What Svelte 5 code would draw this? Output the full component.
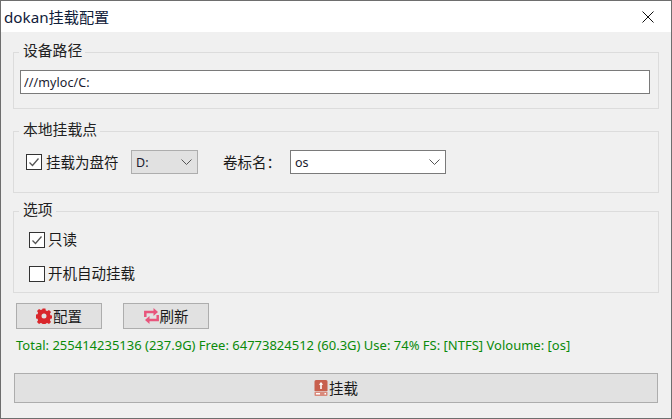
<script>
  let path = $state('///myloc/C:');
</script>

<div class="win">
  <header class="title">
    <span class="title-text">dokan挂载配置</span>
    <svg class="close" width="12" height="12" viewBox="0 0 12 12"><path d="M0.5 0.5L11.5 11.5M11.5 0.5L0.5 11.5" stroke="#111" stroke-width="1" fill="none"/></svg>
  </header>
  <main class="body">
    <fieldset class="group g1">
      <legend>设备路径</legend>
      <input class="path" bind:value={path} />
    </fieldset>
    <fieldset class="group g2">
      <legend>本地挂载点</legend>
      <div class="row">
        <span class="check-row drive">
          <span class="box"><svg width="14" height="14" viewBox="0 0 14 14"><path d="M2.500 7.500l3 3 6-7" stroke="#555" stroke-width="1.300" fill="none"/></svg></span>
          <span class="cn">挂载为盘符</span>
        </span>
        <span class="combo flat"><span class="val">D:</span><svg width="11" height="6" viewBox="0 0 11 6"><path d="M.5.5l5 5 5-5" stroke="#555" fill="none"/></svg></span>
        <span class="cn vol">卷标名：</span>
        <span class="combo white"><span class="val">os</span><svg width="11" height="6" viewBox="0 0 11 6"><path d="M.5.5l5 5 5-5" stroke="#555" fill="none"/></svg></span>
      </div>
    </fieldset>
    <fieldset class="group g3">
      <legend>选项</legend>
      <div class="options">
        <div class="check-row">
          <span class="box"><svg width="14" height="14" viewBox="0 0 14 14"><path d="M2.500 7.500l3 3 6-7" stroke="#555" stroke-width="1.300" fill="none"/></svg></span>
          <span class="cn">只读</span>
        </div>
        <div class="check-row second">
          <span class="box"></span>
          <span class="cn">开机自动挂载</span>
        </div>
      </div>
    </fieldset>
    <div class="actions">
      <button class="btn">
        <svg width="16" height="16" viewBox="0 0 16 16"><path fill="#d9262b" fill-rule="evenodd" d="M6.600.5h2.800l.4 2 1.400.6 1.800-1.100 2 2-1.100 1.800.6 1.400 2 .4v2.800l-2 .4-.6 1.400 1.100 1.800-2 2-1.800-1.100-1.400.6-.4 2H6.600l-.4-2-1.400-.6-1.800 1.100-2-2 1.100-1.800-.6-1.400-2-.4V6.600l2-.4.6-1.400L1 3l2-2 1.800 1.100 1.400-.6zM8 5.500a2.500 2.500 0 1 0 0 5 2.500 2.500 0 0 0 0-5z"/></svg>
        <span class="cn">配置</span>
      </button>
      <button class="btn">
        <svg width="15" height="16" viewBox="0 0 15 16"><path fill="none" stroke="#e8557c" stroke-width="2.500" d="M1.300 9V4H10M13.700 7v5H5"/><path fill="#e8557c" d="M9.500 0l4.500 4-4.500 4zM5.500 8L1 12l4.500 4z"/></svg>
        <span class="cn">刷新</span>
      </button>
    </div>
    <p class="status">Total: 255414235136 (237.9G) Free: 64773824512 (60.3G) Use: 74% FS: [NTFS] Voloume: [os]</p>
    <button class="btn mount">
      <svg width="14" height="16" viewBox="0 0 14 16"><path fill="#c8604e" d="M2 0h10a1.500 1.500 0 0 1 1.500 1.500V11H.5V1.500A1.500 1.500 0 0 1 2 0z"/><path fill="#fff" d="M7 2l2.200 2.700H7.800V9H6.200V4.700H4.800z"/><rect x=".5" y="11.500" width="13" height="4.500" rx="1" fill="#d98a7c"/><rect x="2" y="13" width="4" height="1.500" fill="#fff"/><rect x="10.500" y="13" width="1.500" height="1.500" fill="#fff"/></svg>
      <span class="cn">挂载</span>
    </button>
  </main>
</div>

<style>
  :global(body) { margin: 0; }
  .win {
    width: 672px; height: 419px; box-sizing: border-box;
    border: 1px solid #6e6e6e;
    background: #f0f0f0; display: flex; flex-direction: column;
    font-family: "Noto Sans", "Noto Sans CJK SC", sans-serif; color: #111; overflow: hidden;
  }
  .title {
    height: 31px; flex: none; background: #fff; display: flex; align-items: center;
    justify-content: space-between; padding: 0 17px 0 3px;
  }
  .title-text { font-size: 15.200px; color: #10203a; position: relative; top: -1px; }
  .body { flex: 1; display: flex; flex-direction: column; padding: 0 12px; min-height: 0; }
  .group {
    margin: 0; padding: 0; border: 1px solid #dcdcdc; box-sizing: border-box; min-width: 0;
  }
  legend {
    font-size: 14.800px; padding: 0 3px 0 4px; margin-left: 5px; line-height: 20px; color: #222;
    font-family: "Noto Sans CJK SC", sans-serif; position: relative; top: -2px;
  }
  .g1 { margin-top: 10px; height: 67px; }
  .path {
    display: block; box-sizing: border-box; width: 630px; height: 24px; margin: 8px 0 0 6px;
    border: 1px solid #7a7a7a; background: #fff; padding: 0 3px; font: 12.500px "Noto Sans", sans-serif;
    letter-spacing: .1px; color: #1a1a2e; outline: none;
  }
  .g2 { margin-top: 12px; height: 72px; }
  .row { display: flex; align-items: center; margin-top: 9px; padding-left: 12px; }
  .check-row { display: flex; align-items: center; gap: 3px; }
  .drive { width: 105px; white-space: nowrap; gap: 4px; }
  .cn { font-family: "Noto Sans CJK SC", sans-serif; font-size: 14.500px; color: #1a1a1a; position: relative; top: -1px; }
  .box {
    width: 16px; height: 16px; box-sizing: border-box; border: 1px solid #333; background: #fff;
    display: flex; align-items: center; justify-content: center; flex: none;
  }
  .combo {
    box-sizing: border-box; height: 24px; display: flex; align-items: center; justify-content: space-between;
    padding: 0 5px 0 4px; font: 12.500px "Noto Sans", sans-serif; color: #1a1a2e;
  }
  .combo .val { flex: 1; }
  .flat { width: 67px; background: #e1e1e1; border: 1px solid #adadad; }
  .white { width: 156px; background: #fff; border: 1px solid #7a7a7a; }
  .vol { margin: 0 14px 0 25px; width: 53px; white-space: nowrap; }
  .g3 { margin-top: 8px; height: 92px; }
  .options { padding: 8px 0 0 15px; }
  .second { margin-top: 13px; }
  .actions { display: flex; gap: 21px; margin: 10px 0 0 3px; }
  .btn {
    box-sizing: border-box; width: 86px; height: 26px; background: #e1e1e1; border: 1px solid #adadad;
    display: flex; align-items: center; justify-content: center; gap: 1px; padding: 0;
  }
  .status { margin: 8px 0 0 3px; font-size: 13px; line-height: 16px; color: #0a8a0a; white-space: nowrap; }
  .mount { width: 644px; height: 30px; margin: 20px 0 0 1px; }
</style>
